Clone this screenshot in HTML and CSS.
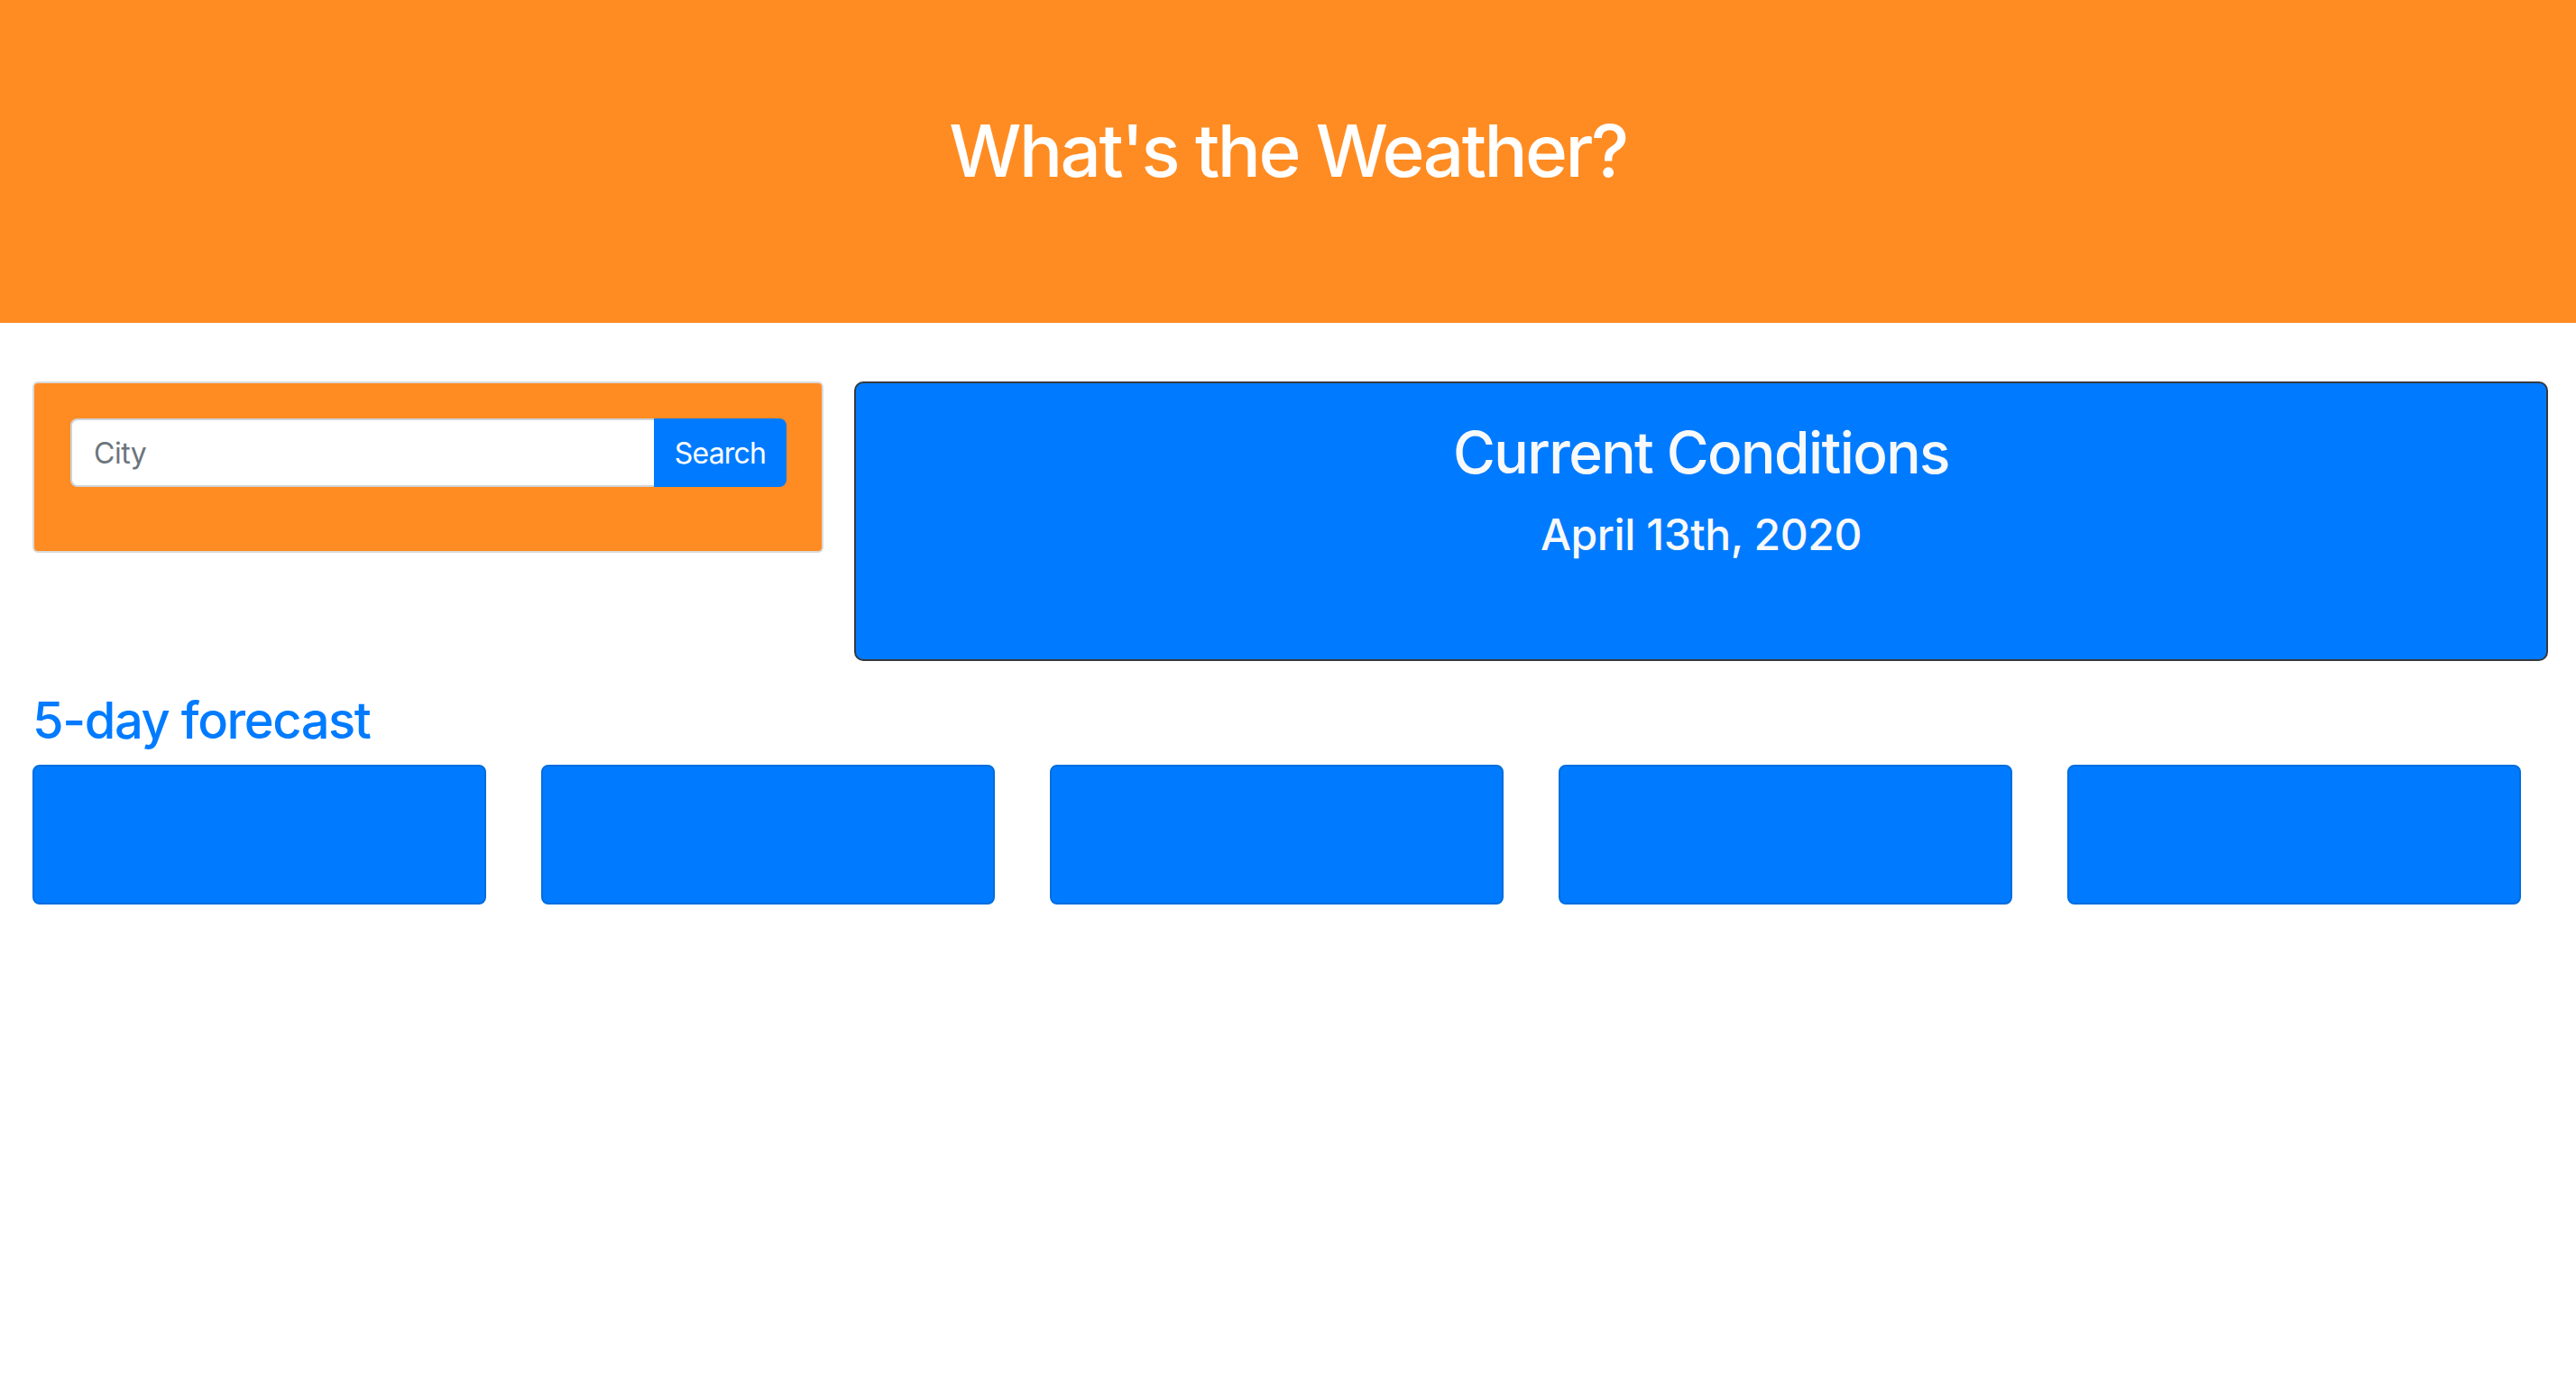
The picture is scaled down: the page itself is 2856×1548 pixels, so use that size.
FILE: index.html
```html
<!DOCTYPE html>
<html lang="en">
<head>
<meta charset="utf-8">
<title>What's the Weather?</title>
<link rel="stylesheet" href="styles.css">
</head>
<body>
<header class="hero">
  <h1 class="hero-title">What's the Weather?</h1>
</header>
<main class="page">
  <section class="top-row">
    <div class="search-card">
      <form class="input-group">
        <input class="city-input" type="text" placeholder="City">
        <button class="search-btn" type="button">Search</button>
      </form>
    </div>
    <div class="current-card">
      <h2 class="current-title">Current Conditions</h2>
      <h4 class="current-date">April 13th, 2020</h4>
    </div>
  </section>
  <h3 class="forecast-title">5-day forecast</h3>
  <section class="forecast-row">
    <div class="forecast-card"></div>
    <div class="forecast-card"></div>
    <div class="forecast-card"></div>
    <div class="forecast-card"></div>
    <div class="forecast-card"></div>
  </section>
</main>
</body>
</html>
```
FILE: styles.css
```css
* { box-sizing: border-box; }
html, body { margin: 0; padding: 0; background: #ffffff; }
body {
  font-family: Inter, "Noto Sans", "Liberation Sans", sans-serif;
  color: #212529;
}
.hero {
  background: #ff8c22;
  height: 358px;
  padding-top: 119px;
  text-align: center;
}
.hero-title {
  margin: 0;
  font-size: 80px;
  line-height: 1.2;
  font-weight: 500;
  letter-spacing: -2.5px;
  color: #ffffff;
}
.page {
  padding: 65px 31px 0 36px;
}
.top-row {
  display: flex;
  gap: 34px;
  align-items: flex-start;
}
.search-card {
  width: 877px;
  flex: 0 0 877px;
  height: 190px;
  background: #ff8c22;
  border: 2px solid #dadada;
  border-radius: 6px;
  padding: 39px 39px 0 40px;
}
.input-group {
  display: flex;
  height: 76px;
  margin: 0;
}
.city-input {
  flex: 1;
  min-width: 0;
  height: 76px;
  border: 2px solid #ced4da;
  border-right: none;
  border-radius: 8px 0 0 8px;
  padding: 0 24px;
  font-family: inherit;
  font-size: 32px;
  letter-spacing: -0.5px;
  color: #495057;
  background: #fff;
  outline: none;
}
.city-input::placeholder { color: #6c757d; }
.search-btn {
  width: 147px;
  height: 76px;
  border: none;
  border-radius: 0 8px 8px 0;
  background: #007bff;
  color: #ffffff;
  font-family: inherit;
  font-size: 32px;
  letter-spacing: -0.8px;
  padding: 0;
}
.current-card {
  flex: 1;
  height: 310px;
  background: #007bff;
  border: 2px solid #343a40;
  border-radius: 10px;
  padding-top: 39px;
  text-align: center;
  color: #f8f9fa;
}
.current-title {
  margin: 0 0 23px;
  font-size: 64px;
  line-height: 1.2;
  font-weight: 500;
  letter-spacing: -1.6px;
}
.current-date {
  margin: 0;
  font-size: 48px;
  line-height: 1.2;
  font-weight: 500;
  letter-spacing: -0.45px;
}
.forecast-title {
  margin: 33px 0 15px;
  font-size: 56px;
  line-height: 1.2;
  font-weight: 500;
  letter-spacing: -1.4px;
  color: #007bff;
}
.forecast-row {
  display: flex;
  gap: 61px;
}
.forecast-card {
  width: 503px;
  height: 155px;
  background: #007bff;
  border: 2px solid #006ddf;
  border-radius: 8px;
}
```
